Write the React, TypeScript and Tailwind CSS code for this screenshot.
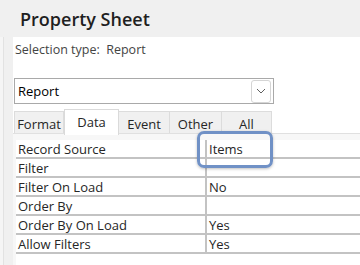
import React from "react";

const rows: { label: string; value: string }[] = [
  { label: "Record Source", value: "Items" },
  { label: "Filter", value: "" },
  { label: "Filter On Load", value: "No" },
  { label: "Order By", value: "" },
  { label: "Order By On Load", value: "Yes" },
  { label: "Allow Filters", value: "Yes" },
];

const tabs = [
  { name: "Format", w: "w-[50px]" },
  { name: "Data", w: "w-[55px]" },
  { name: "Event", w: "w-[51px]" },
  { name: "Other", w: "w-[52px]" },
  { name: "All", w: "w-[50px]" },
];

export default function App() {
  return (
    <div
      className="relative w-[360px] h-[265px] overflow-hidden bg-[#f0f0f0] text-[#262626]"
      style={{ fontFamily: '"Open Sans", "Noto Sans", sans-serif' }}
    >
      {/* title bar */}
      <div className="flex h-[37px] items-center pl-[20px]">
        <span className="text-[18px] font-semibold leading-none text-[#1f1f1f]">Property Sheet</span>
      </div>

      <div className="flex h-[228px]">
        <div className="flex w-[13px]">
          <div className="w-[4px] border-r border-[#e2e2e2] bg-[#f5f5f5]" />
          <div className="flex-1" />
        </div>

        <div className="flex flex-1 flex-col bg-white">
          <div className="pl-[2px] pt-[4px] text-[12.5px] leading-[17px] text-[#444]">
            Selection type:&nbsp; Report
          </div>

          {/* combo */}
          <div className="ml-[1px] mt-[20px] flex h-[26px] w-[260px] items-center border border-[#a9a9a9] pl-[3px] pr-[2px]">
            <span className="flex-1 text-[13px] leading-none text-black">Report</span>
            <div className="flex h-[23px] w-[20px] items-center justify-center rounded-[3px] border border-[#d5d5d5]">
              <svg width="10" height="6" viewBox="0 0 10 6" fill="none">
                <path d="M1 1l4 4 4-4" stroke="#606060" strokeWidth="1" />
              </svg>
            </div>
          </div>

          {/* tabs */}
          <div className="ml-[1px] mt-[5px] flex h-[26px] items-end">
            {tabs.map((t) => {
              const active = t.name === "Data";
              return (
                <div
                  key={t.name}
                  className={
                    active
                      ? `${t.w} relative z-10 flex h-[26px] items-center justify-center border border-b-0 border-[#dadada] bg-white pt-[1px] text-[13px]`
                      : `${t.w} flex h-[24px] items-center justify-center border-r border-t border-[#dcdcdc] bg-[#f0f0f0] pt-[3px] text-[13px] first:border-l`
                  }
                >
                  {t.name}
                </div>
              );
            })}
          </div>

          {/* property grid */}
          <div className="-mt-[2px] flex flex-1 flex-col border-t border-[#e0e0e0] bg-[#f7f7f7] pl-[3px] pt-[6px]">
            <div className="flex-1 bg-white">
              {rows.map((r) => (
                <div key={r.label} className="flex h-[19px] border-b-2 border-[#c3c3c3] text-[13px] leading-[17px]">
                  <div className="w-[191px] border-r-2 border-[#c3c3c3] pl-[2px] pt-[1px]">{r.label}</div>
                  <div className="flex-1 pl-[2px] pt-[1px]">{r.value}</div>
                </div>
              ))}
            </div>
          </div>
        </div>
      </div>

      {/* highlight */}
      <div className="absolute left-[197px] top-[131px] h-[37px] w-[76px] rounded-[7px] border-[3px] border-[#7091c6] shadow-[0_1px_3px_rgba(0,0,0,0.25)]" />
    </div>
  );
}
